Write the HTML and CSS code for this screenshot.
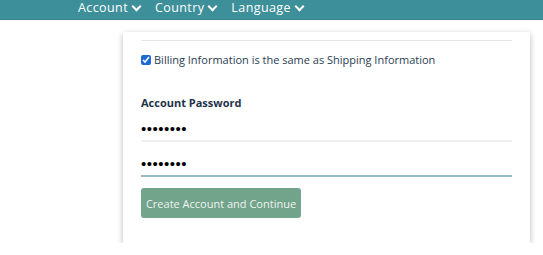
FILE: index.html
```html
<!DOCTYPE html>
<html lang="en">
<head>
    <meta charset="UTF-8">
    <title>Create Account</title>
    <link rel="stylesheet" href="styles.css">
</head>
<body>

    <!-- Top navigation -->
    <nav class="topnav">
        <a class="nav-item" href="#">Account <span class="chev"></span></a>
        <a class="nav-item" href="#">Country <span class="chev"></span></a>
        <a class="nav-item" href="#">Language <span class="chev"></span></a>
    </nav>

    <!-- Checkout card -->
    <main class="page">
        <div class="card">
            <div class="field-cut"></div>

            <label class="check-row">
                <input type="checkbox" checked>
                <span>Billing Information is the same as Shipping Information</span>
            </label>

            <h3 class="section-title">Account Password</h3>
            <input class="pw-input" type="password" value="password">
            <input class="pw-input pw-focus" type="password" value="password">

            <button class="btn-create" type="button">Create Account and Continue</button>
        </div>
    </main>

</body>
</html>
```

FILE: styles.css
```css
/* Base */
body {
    margin: 0;
    background: #fff;
    font-family: "Open Sans", "Liberation Sans", sans-serif;
    color: #2c3e50;
}
/* Top navigation bar */
.topnav {
    height: 19px;
    background-color: #3d8f9a;
    border-bottom: 1px solid #37828c;
    display: flex;
    align-items: flex-start;
    gap: 13px;
    padding-left: 78px;
}
.nav-item {
    color: #fff;
    text-decoration: none;
    font-size: 12.5px;
    letter-spacing: 0.4px;
    line-height: 16px;
    display: flex;
    align-items: center;
    gap: 3px;
}
.chev {
    width: 5px;
    height: 5px;
    border-right: 2px solid #fff;
    border-bottom: 2px solid #fff;
    transform: rotate(45deg);
    margin: -4px 2px 0 2px;
}
/* Card */
.page {
    padding-top: 12px;
}
.card {
    margin-left: 123px;
    width: 371px;
    padding: 0 18px 25px 18px;
    background: #fff;
    box-shadow: 0 2px 6px rgba(0, 0, 0, 0.28);
}
.field-cut {
    height: 8px;
    border-bottom: 1px solid #e6e6e6;
}
.check-row {
    display: flex;
    align-items: center;
    gap: 3px;
    margin-top: 11px;
    font-size: 11px;
    color: #2a3d52;
}
.check-row input {
    width: 10px;
    height: 10px;
    margin: 0;
    accent-color: #1c6bd6;
}
.section-title {
    margin: 28px 0 0 0;
    font-size: 11px;
    font-weight: bold;
    color: #1d3349;
}
.pw-input {
    display: block;
    width: 100%;
    box-sizing: border-box;
    border: none;
    border-bottom: 2px solid #efefef;
    padding: 0;
    height: 25px;
    margin-top: 7px;
    font-size: 15px;
    letter-spacing: 0.5px;
    color: #000;
    outline: none;
}
.pw-input + .pw-input {
    margin-top: 10px;
}
.pw-focus {
    border-bottom-color: #94bcc0;
}
/* Button */
.btn-create {
    display: block;
    margin-top: 11px;
    width: 160px;
    height: 30px;
    padding: 0;
    white-space: nowrap;
    border: none;
    border-radius: 3px;
    background-color: #72a38b;
    color: #eef4f1;
    font-family: inherit;
    font-size: 11px;
}
```
